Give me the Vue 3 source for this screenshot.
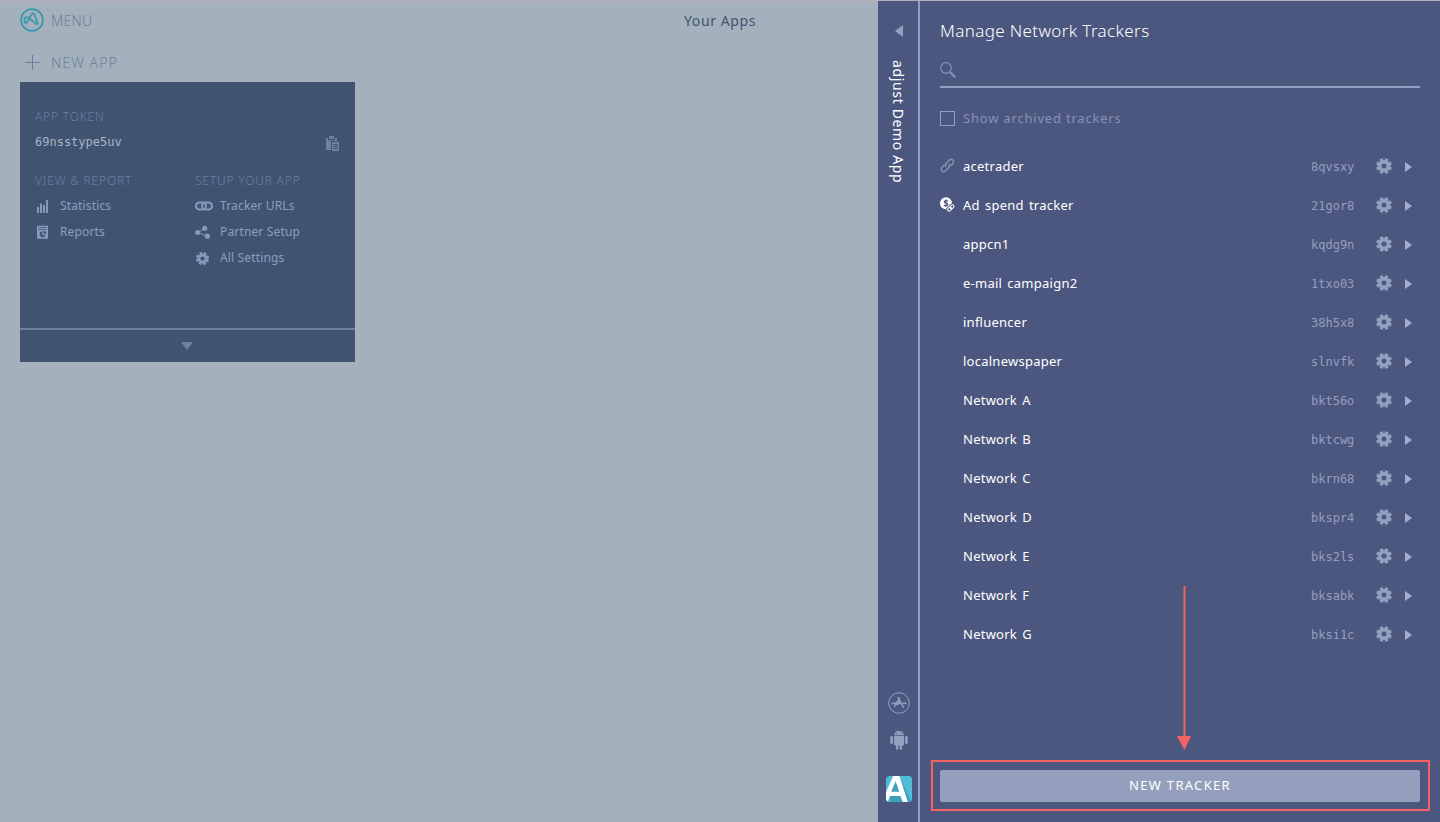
<template>
  <div class="page">
    <main class="apps">
      <header class="topbar">
        <div class="menu">
          <svg class="logo" viewBox="0 0 24 24">
            <circle cx="12" cy="12" r="10.9" />
            <path d="M5 9.800C6.200 8.500 8 9.300 9.500 10.500L16 15.800C17.300 16.700 18 15.800 17.500 14.500L14.300 6.500C13.700 5.100 12.500 5.100 11.700 6.300L7.500 13.300C6.300 15.200 5 15.600 4.600 13.800Q4.200 11 5 9.800Z" />
          </svg>
          <span>MENU</span>
        </div>
        <h1 class="title">Your Apps</h1>
      </header>

      <div class="new-app">
        <svg class="plus" viewBox="0 0 15 15"><path d="M7.5 0V15M0 7.5H15" /></svg>
        <span>NEW APP</span>
      </div>

      <section class="card">
        <div class="card-body">
          <h2 class="label">APP TOKEN</h2>
          <div class="token-row">
            <span class="token">69nsstype5uv</span>
            <svg class="clipboard" viewBox="0 0 13 15">
              <path d="M0 2H2V4.2H9V2H11V5H5V14H0Z" />
              <path d="M3 0H8V3H3Z" />
              <path d="M6 6H13V15H6Z" />
              <path class="lines" d="M7.3 8.5H11.8M7.3 10.5H11.8M7.3 12.5H11.8" />
            </svg>
          </div>
          <div class="columns">
            <div class="col">
              <h2 class="label">VIEW &amp; REPORT</h2>
              <a class="link">
                <svg viewBox="0 0 18 14"><path d="M2 8H4V14H2ZM5 4.500H7V14H5ZM8 6H10V14H8ZM11 1H13V14H11Z" /></svg>
                <span>Statistics</span>
              </a>
              <a class="link">
                <svg viewBox="0 0 18 14">
                  <path fill-rule="evenodd" d="M2 .7H13V13.700H2ZM3.500 2V2.800H11.500V2ZM3.500 4V4.800H11.500V4ZM7 6.200A3 3 0 1 0 10.400 10H7ZM8.300 5.800V8.700H11.300A3 3 0 0 0 8.300 5.800Z" />
                </svg>
                <span>Reports</span>
              </a>
            </div>
            <div class="col">
              <h2 class="label">SETUP YOUR APP</h2>
              <a class="link">
                <svg viewBox="0 0 18 14">
                  <g class="chain">
                    <rect x="1" y="3.500" width="10" height="7" rx="3.500" />
                    <rect x="7" y="3.500" width="10" height="7" rx="3.500" />
                  </g>
                </svg>
                <span>Tracker URLs</span>
              </a>
              <a class="link">
                <svg viewBox="0 0 18 14">
                  <path class="share" d="M10 3.200L3 7.500L12.200 11.200" />
                  <circle cx="9.700" cy="3.300" r="2.600" />
                  <circle cx="2.600" cy="7.500" r="2.500" />
                  <circle cx="12.300" cy="11.200" r="2.600" />
                </svg>
                <span>Partner Setup</span>
              </a>
              <a class="link">
                <svg viewBox="0 0 18 14">
                  <g class="gear-shape" transform="translate(7.500 7.500) scale(.84)">
                    <circle r="4.300" stroke-width="3.600" />
                    <circle r="6.700" stroke-width="2.400" pathLength="16" stroke-dasharray="1.200 .8" stroke-dashoffset="-.4" />
                  </g>
                </svg>
                <span>All Settings</span>
              </a>
            </div>
          </div>
        </div>
        <div class="card-footer">
          <svg class="down" viewBox="0 0 12 8"><path d="M0 0H12L6 8Z" /></svg>
        </div>
      </section>
    </main>

    <aside class="strip">
      <svg class="back" viewBox="0 0 8 12"><path d="M8 0V12L0 6Z" /></svg>
      <div class="app-name">adjust Demo App</div>
      <div class="platforms">
        <svg class="appstore" viewBox="0 0 22 22">
          <circle cx="11" cy="11" r="10.300" />
          <path class="bars" d="M3.700 11.300H8.200M10 11.300H12.500M14.500 11.300H18.400" />
          <path class="sticks" d="M11.800 5.300L6.200 15M9.900 5.300L15.800 16M12.300 8L9 13" />
        </svg>
        <svg class="android" viewBox="0 0 18 20">
          <path d="M4 5.300C4.200 3.600 5 2.400 6.300 1.700L5.500.3L5.900 0L6.800 1.500Q9 .7 11.200 1.500L12.100 0L12.500.3L11.700 1.700C13 2.400 13.800 3.600 14 5.300Z" />
          <path d="M4 6H14V14.500Q14 15.500 13 15.500H12V19A1.200 1.200 0 0 1 9.700 19V15.500H8.300V19A1.200 1.200 0 0 1 6 19V15.500H5Q4 15.500 4 14.500Z" />
          <rect x=".3" y="6" width="2.700" height="8" rx="1.300" />
          <rect x="15" y="6" width="2.700" height="8" rx="1.300" />
          <circle class="eye" cx="6.800" cy="3.600" r=".6" />
          <circle class="eye" cx="11.200" cy="3.600" r=".6" />
        </svg>
        <svg class="app-icon" viewBox="0 0 26 26">
          <defs><clipPath id="rounded"><rect width="26" height="26" rx="4" /></clipPath></defs>
          <g clip-path="url(#rounded)">
            <path fill="#50bdd7" d="M0 0H26V26H0Z" />
            <path fill="#40a0ba" d="M13.500 0L26 20V26H4V18Z" />
            <path fill="#50bdd7" d="M16 0H26V26H25L14.500 2Z" />
            <path fill="#fff" fill-rule="evenodd" d="M7.200 0H13.500L21.800 26H16.700L14.500 20H4L1.700 26H0V16.200ZM9.500 5L5.200 15.700H13.300Z" />
          </g>
        </svg>
      </div>
    </aside>

    <section class="panel">
      <h1 class="panel-title">Manage Network Trackers</h1>
      <div class="search">
        <svg viewBox="0 0 16 17">
          <circle cx="6" cy="6" r="5.300" />
          <path d="M9.800 9.800L11 11" />
          <path class="handle" d="M10.700 10.700L15.300 15.500" />
        </svg>
      </div>
      <label class="archived">
        <span class="checkbox"></span>
        <span>Show archived trackers</span>
      </label>

      <ul class="trackers">
        <li v-for="t in trackers" :key="t.token" class="tracker-row">
          <span class="tracker-icon">
            <svg v-if="t.icon === 'link'" class="link-icon" viewBox="0 0 15 15">
              <path d="M6.200 8.800C5 7.600 5 6.400 6.200 5.200L9.600 1.800C12 .2 14.600 2.800 13.100 5.200L10.700 7.600" />
              <path d="M8.600 6.200C9.800 7.400 9.800 8.600 8.600 9.800L5.200 13.200C2.800 14.700 .2 12.100 1.800 9.700L4.200 7.300" />
            </svg>
            <svg v-if="t.icon === 'spend'" class="spend-icon" viewBox="0 0 15 15">
              <circle cx="6" cy="6.200" r="6" />
              <path class="dollar" d="M8 4.300Q7.300 3.600 6 3.600C3.700 3.600 3.700 5.800 6 6.100C8.500 6.500 8.500 8.800 6 8.800Q4.700 8.800 3.900 8M6 2.300V10" />
              <g class="gap" transform="rotate(-45 10.800 11)">
                <rect x="7" y="9.500" width="4.300" height="3" rx="1.500" />
                <rect x="10.300" y="9.500" width="4.300" height="3" rx="1.500" />
              </g>
              <g class="mini-chain" transform="rotate(-45 10.800 11)">
                <rect x="7" y="9.500" width="4.300" height="3" rx="1.500" />
                <rect x="10.300" y="9.500" width="4.300" height="3" rx="1.500" />
              </g>
            </svg>
          </span>
          <span class="tracker-name">{{ t.name }}</span>
          <span class="tracker-token">{{ t.token }}</span>
          <svg class="gear gear-shape" viewBox="-8 -8 16 16">
            <circle r="4.400" stroke-width="3.600" />
            <circle r="6.700" stroke-width="2.400" pathLength="16" stroke-dasharray="1.200 .8" stroke-dashoffset="-.4" />
          </svg>
          <svg class="next" viewBox="0 0 7 10"><path d="M0 0L7 5L0 10Z" /></svg>
        </li>
      </ul>

      <button class="new-tracker">NEW TRACKER</button>
      <svg class="arrow" viewBox="0 0 14 164"><path d="M6.500 0H8.500V150H14L7.500 164L0 150H6.500Z" /></svg>
      <div class="highlight"></div>
    </section>
  </div>
</template>

<script setup>
const trackers = [
  { name: 'acetrader', token: '8qvsxy', icon: 'link' },
  { name: 'Ad spend tracker', token: '21gor8', icon: 'spend' },
  { name: 'appcn1', token: 'kqdg9n' },
  { name: 'e-mail campaign2', token: '1txo03' },
  { name: 'influencer', token: '38h5x8' },
  { name: 'localnewspaper', token: 'slnvfk' },
  { name: 'Network A', token: 'bkt56o' },
  { name: 'Network B', token: 'bktcwg' },
  { name: 'Network C', token: 'bkrn68' },
  { name: 'Network D', token: 'bkspr4' },
  { name: 'Network E', token: 'bks2ls' },
  { name: 'Network F', token: 'bksabk' },
  { name: 'Network G', token: 'bksi1c' }
]
</script>

<style>
body {
  margin: 0;
  overflow: hidden;
}
</style>

<style scoped>
.page {
  display: flex;
  box-sizing: border-box;
  width: 1440px;
  height: 822px;
  border-top: 1px solid #b3b1b5;
  background: #a4b1bc;
  font-family: "Noto Sans", "Open Sans", sans-serif;
  font-weight: 400;
  white-space: nowrap;
}

h1, h2 {
  margin: 0;
  font-weight: inherit;
}

svg {
  display: block;
  flex: none;
}

/* apps */
.apps {
  width: 878px;
  box-sizing: border-box;
  padding: 7px 0 0 20px;
  color: #6a809e;
}

.topbar {
  display: flex;
  align-items: center;
  height: 24px;
}

.menu {
  display: flex;
  align-items: center;
  width: 664px;
  gap: 7px;
  font-size: 14px;
  font-weight: 300;
  letter-spacing: 0.3px;
}

.logo {
  width: 24px;
  height: 24px;
  fill: none;
  stroke: #3599ad;
  stroke-width: 1.7;
}

.title {
  color: #405472;
  font-size: 14px;
  letter-spacing: 0.6px;
}

.new-app {
  display: flex;
  align-items: center;
  gap: 11px;
  height: 20px;
  margin: 20px 0 10px 5px;
  font-size: 14px;
  font-weight: 300;
  letter-spacing: 1.1px;
}

.plus {
  width: 15px;
  height: 15px;
  stroke: #6a809e;
}

.card {
  width: 335px;
  height: 280px;
  background: #405472;
}

.card-body {
  box-sizing: border-box;
  height: 246px;
  padding: 25px 15px 0;
}

.label {
  height: 20px;
  line-height: 20px;
  color: #6a7fa0;
  font-size: 12px;
  font-weight: 300;
  letter-spacing: 0.8px;
}

.token-row {
  display: flex;
  align-items: center;
  justify-content: space-between;
  height: 20px;
  margin: 5px 0 19px;
}

.token {
  color: #a7b4c4;
  font-family: "DejaVu Sans Mono", monospace;
  font-size: 12px;
}

.clipboard {
  width: 13px;
  height: 15px;
  margin: 3px 1px 0 0;
  fill: #6e82a0;
}

.lines {
  stroke: #405472;
}

.columns {
  display: flex;
}

.col {
  flex: none;
  width: 160px;
}

.link {
  display: flex;
  align-items: center;
  gap: 7px;
  height: 20px;
  margin-top: 6px;
  color: #8a9fbe;
  font-size: 12px;
  letter-spacing: 0.15px;
}

.link:nth-of-type(1) {
  margin-top: 4px;
}

.link svg {
  width: 18px;
  height: 14px;
  margin-top: 2px;
  fill: #859abb;
}

.chain {
  fill: none;
  stroke: #859abb;
  stroke-width: 2;
}

.share {
  stroke: #859abb;
  fill: none;
}

.card-footer {
  display: flex;
  justify-content: center;
  align-items: center;
  height: 32px;
  border-top: 2px solid #6e829f;
}

.down {
  width: 12px;
  height: 8px;
  margin-right: 1px;
  fill: #6e82a0;
}

.gear-shape circle {
  fill: none;
  stroke: #94a0bf;
}

.link .gear-shape circle {
  stroke: #859abb;
}

/* strip with the current app */
.strip {
  display: flex;
  flex-direction: column;
  align-items: center;
  box-sizing: border-box;
  width: 42px;
  padding-top: 24px;
  border-right: 2px solid #949fbf;
  background: #4c577f;
}

.back {
  width: 8px;
  height: 12px;
  margin-left: 2px;
  fill: #94a0bf;
}

.app-name {
  margin-top: 23px;
  color: #fff;
  font-size: 14px;
  line-height: 20px;
  letter-spacing: 0.65px;
  writing-mode: vertical-rl;
}

.platforms {
  display: flex;
  flex-direction: column;
  align-items: center;
  margin: auto 0 20px 1px;
}

.appstore {
  width: 22px;
  height: 22px;
  margin-bottom: 16px;
  fill: none;
  stroke: #94a0bf;
}

.appstore .sticks {
  stroke-width: 1.4;
}

.appstore .bars {
  stroke-width: 1.8;
}

.android {
  width: 18px;
  height: 20px;
  margin-bottom: 26px;
  fill: #94a0bf;
}

.eye {
  fill: #4c577f;
}

.app-icon {
  width: 26px;
  height: 26px;
}

/* tracker panel */
.panel {
  position: relative;
  display: flex;
  flex-direction: column;
  box-sizing: border-box;
  width: 520px;
  padding: 16px 20px 20px;
  background: #4c577f;
  color: #fff;
}

.panel-title {
  height: 28px;
  line-height: 28px;
  font-size: 17px;
  font-weight: 300;
  letter-spacing: 0.37px;
}

.search {
  box-sizing: border-box;
  height: 43px;
  padding-top: 17px;
  border-bottom: 2px solid #949fbf;
}

.search svg {
  width: 16px;
  height: 17px;
  fill: none;
  stroke: #8792b3;
  stroke-width: 1.2;
}

.search .handle {
  stroke-width: 2.3;
}

.archived {
  display: flex;
  align-items: center;
  gap: 8px;
  height: 20px;
  margin-top: 20px;
  color: #8792b3;
  font-size: 13px;
  letter-spacing: 0.8px;
}

.checkbox {
  box-sizing: border-box;
  width: 15px;
  height: 15px;
  border: 1px solid #949fbf;
}

.trackers {
  margin: 18px 0 0;
  padding: 0;
  list-style: none;
}

.tracker-row {
  display: flex;
  align-items: center;
  height: 39px;
}

.tracker-icon {
  width: 23px;
}

.link-icon, .spend-icon {
  width: 15px;
  height: 15px;
}

.link-icon {
  fill: none;
  stroke: #8792b3;
  stroke-width: 1.5;
}

.spend-icon {
  fill: #fff;
}

.dollar, .gap, .mini-chain {
  fill: none;
  stroke: #4c577f;
  stroke-width: 1.2;
}

.gap {
  stroke-width: 2.8;
}

.mini-chain {
  stroke: #fff;
  stroke-width: 1;
}

.tracker-name {
  flex: 1;
  font-size: 13px;
  letter-spacing: 0.25px;
  word-spacing: 1.5px;
}

.tracker-token {
  width: 65px;
  padding-top: 2px;
  color: #949fbf;
  font-family: "DejaVu Sans Mono", monospace;
  font-size: 12px;
}

.gear {
  width: 16px;
  height: 16px;
  margin-top: 1px;
}

.next {
  width: 7px;
  height: 10px;
  margin: 2px 8px 0 13px;
  fill: #a4aecb;
}

.new-tracker {
  height: 32px;
  margin-top: auto;
  padding: 0 0 2px;
  border: 0;
  border-radius: 2px;
  background: #949fbd;
  color: #fff;
  font-family: inherit;
  font-size: 13px;
  letter-spacing: 1.3px;
}

/* callout over the panel */
.arrow {
  position: absolute;
  left: 257px;
  top: 585px;
  width: 14px;
  height: 164px;
  fill: #f46264;
}

.highlight {
  position: absolute;
  left: 11px;
  right: 10px;
  top: 759px;
  box-sizing: border-box;
  height: 51px;
  border: 2px solid #f46264;
}
</style>
